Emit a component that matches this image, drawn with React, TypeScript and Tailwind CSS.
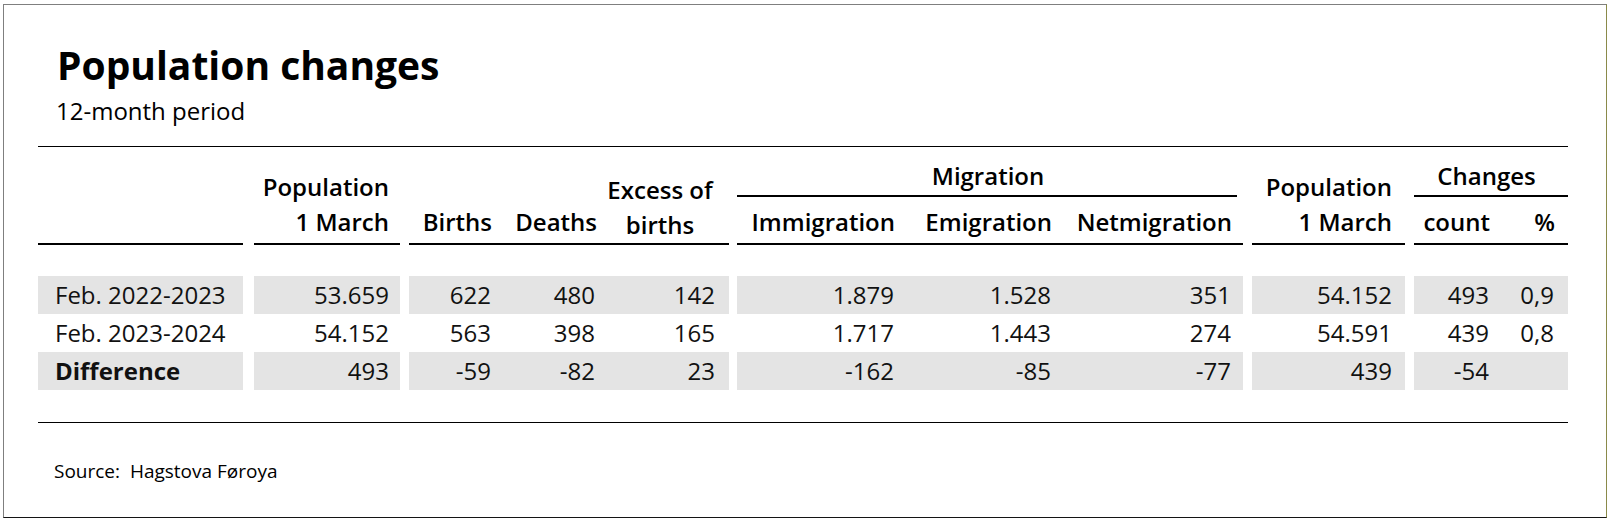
import React from "react";

const GRID =
  "grid grid-cols-[205px_11px_146px_9px_94px_104px_122px_8px_169px_157px_180px_9px_153px_9px_89px_65px]";

type Row = { cells: string[]; shaded: boolean; bold?: boolean };

const rows: Row[] = [
  {
    cells: ["Feb. 2022-2023", "53.659", "622", "480", "142", "1.879", "1.528", "351", "54.152", "493", "0,9"],
    shaded: true,
  },
  {
    cells: ["Feb. 2023-2024", "54.152", "563", "398", "165", "1.717", "1.443", "274", "54.591", "439", "0,8"],
    shaded: false,
  },
  {
    cells: ["Difference", "493", "-59", "-82", "23", "-162", "-85", "-77", "439", "-54", ""],
    shaded: true,
    bold: true,
  },
];

function BodyRow({ row }: { row: Row }) {
  const bg = row.shaded ? "bg-[#e4e4e4]" : "";
  const c = row.cells;
  const num = `h-[38px] leading-[38px] text-right whitespace-nowrap ${bg}`;
  return (
    <>
      <div className={`h-[38px] leading-[38px] pl-[17px] whitespace-nowrap ${bg} ${row.bold ? "font-bold" : ""}`}>{c[0]}</div>
      <div />
      <div className={`${num} pr-[11px]`}>{c[1]}</div>
      <div />
      <div className={`${num} pr-[12px]`}>{c[2]}</div>
      <div className={`${num} pr-[12px]`}>{c[3]}</div>
      <div className={`${num} pr-[14px]`}>{c[4]}</div>
      <div />
      <div className={`${num} pr-[12px]`}>{c[5]}</div>
      <div className={`${num} pr-[12px]`}>{c[6]}</div>
      <div className={`${num} pr-[12px]`}>{c[7]}</div>
      <div />
      <div className={`${num} pr-[13px]`}>{c[8]}</div>
      <div />
      <div className={`${num} pr-[14px]`}>{c[9]}</div>
      <div className={`${num} pr-[14px]`}>{c[10]}</div>
    </>
  );
}

export default function App() {
  return (
    <div className="w-[1611px] h-[523px] bg-white pt-[4px] pl-[3px] font-['Open_Sans',sans-serif] text-[#111]">
      <div className="w-[1604px] h-[514px] border border-t-[#7f7f7f] border-l-[#7f7f7f] border-r-[#8a8a4a] border-b-[#141414] pl-[34px] pr-[38px] pt-[34px]">
        <div className="pl-[19px]">
          <h1 className="text-[39px] leading-[52px] font-bold text-black">Population changes</h1>
          <p className="mt-[4px] -ml-[1px] text-[24px] leading-[32px] text-black">12-month period</p>
        </div>
        <div className="mt-[19px] h-px bg-black" />

        {/* header */}
        <div className={`${GRID} grid-rows-[50px_48px] text-[24px] leading-[35px] font-semibold text-black`}>
          <div className="col-start-1 col-end-2 row-start-1 row-end-3 border-b-2 border-black" />
          <div className="col-start-3 col-end-4 row-start-1 row-end-3 border-b-2 border-black flex flex-col justify-end items-end pr-[11px] pb-[4px]">
            <span>Population</span>
            <span>1 March</span>
          </div>
          <div className="col-start-5 col-end-6 row-start-1 row-end-3 border-b-2 border-black flex flex-col justify-end items-end pr-[11px] pb-[4px]">
            <span>Births</span>
          </div>
          <div className="col-start-6 col-end-7 row-start-1 row-end-3 border-b-2 border-black flex flex-col justify-end items-end pr-[10px] pb-[4px]">
            <span>Deaths</span>
          </div>
          <div className="col-start-7 col-end-8 row-start-1 row-end-3 border-b-2 border-black flex flex-col justify-end items-center pr-[16px] pb-[1px] text-center">
            <span>Excess of</span>
            <span>births</span>
          </div>
          <div className="col-start-9 col-end-12 row-start-1 row-end-2 mr-[6px] border-b-2 border-black flex flex-col justify-end items-center pl-[2px] pb-[2px]">
            <span>Migration</span>
          </div>
          <div className="col-start-9 col-end-10 row-start-2 row-end-3 border-b-2 border-black flex flex-col justify-end items-end pr-[11px] pb-[4px]">
            <span>Immigration</span>
          </div>
          <div className="col-start-10 col-end-11 row-start-2 row-end-3 border-b-2 border-black flex flex-col justify-end items-end pr-[11px] pb-[4px]">
            <span>Emigration</span>
          </div>
          <div className="col-start-11 col-end-12 row-start-2 row-end-3 border-b-2 border-black flex flex-col justify-end items-end pr-[11px] pb-[4px]">
            <span>Netmigration</span>
          </div>
          <div className="col-start-13 col-end-14 row-start-1 row-end-3 border-b-2 border-black flex flex-col justify-end items-end pr-[13px] pb-[4px]">
            <span>Population</span>
            <span>1 March</span>
          </div>
          <div className="col-start-15 col-end-17 row-start-1 row-end-2 border-b-2 border-black flex flex-col justify-end items-center pr-[9px] pb-[2px]">
            <span>Changes</span>
          </div>
          <div className="col-start-15 col-end-16 row-start-2 row-end-3 border-b-2 border-black flex flex-col justify-end items-end pr-[13px] pb-[4px]">
            <span>count</span>
          </div>
          <div className="col-start-16 col-end-17 row-start-2 row-end-3 border-b-2 border-black flex flex-col justify-end items-end pr-[13px] pb-[4px]">
            <span>%</span>
          </div>
        </div>

        {/* body */}
        <div className={`${GRID} mt-[31px] text-[24px]`}>
          {rows.map((r, i) => (
            <BodyRow key={i} row={r} />
          ))}
        </div>

        <div className="mt-[32px] h-px bg-black" />
        <p className="mt-[35px] pl-[16px] text-[19px] leading-[26px] whitespace-pre text-black">Source:  Hagstova Føroya</p>
      </div>
    </div>
  );
}
